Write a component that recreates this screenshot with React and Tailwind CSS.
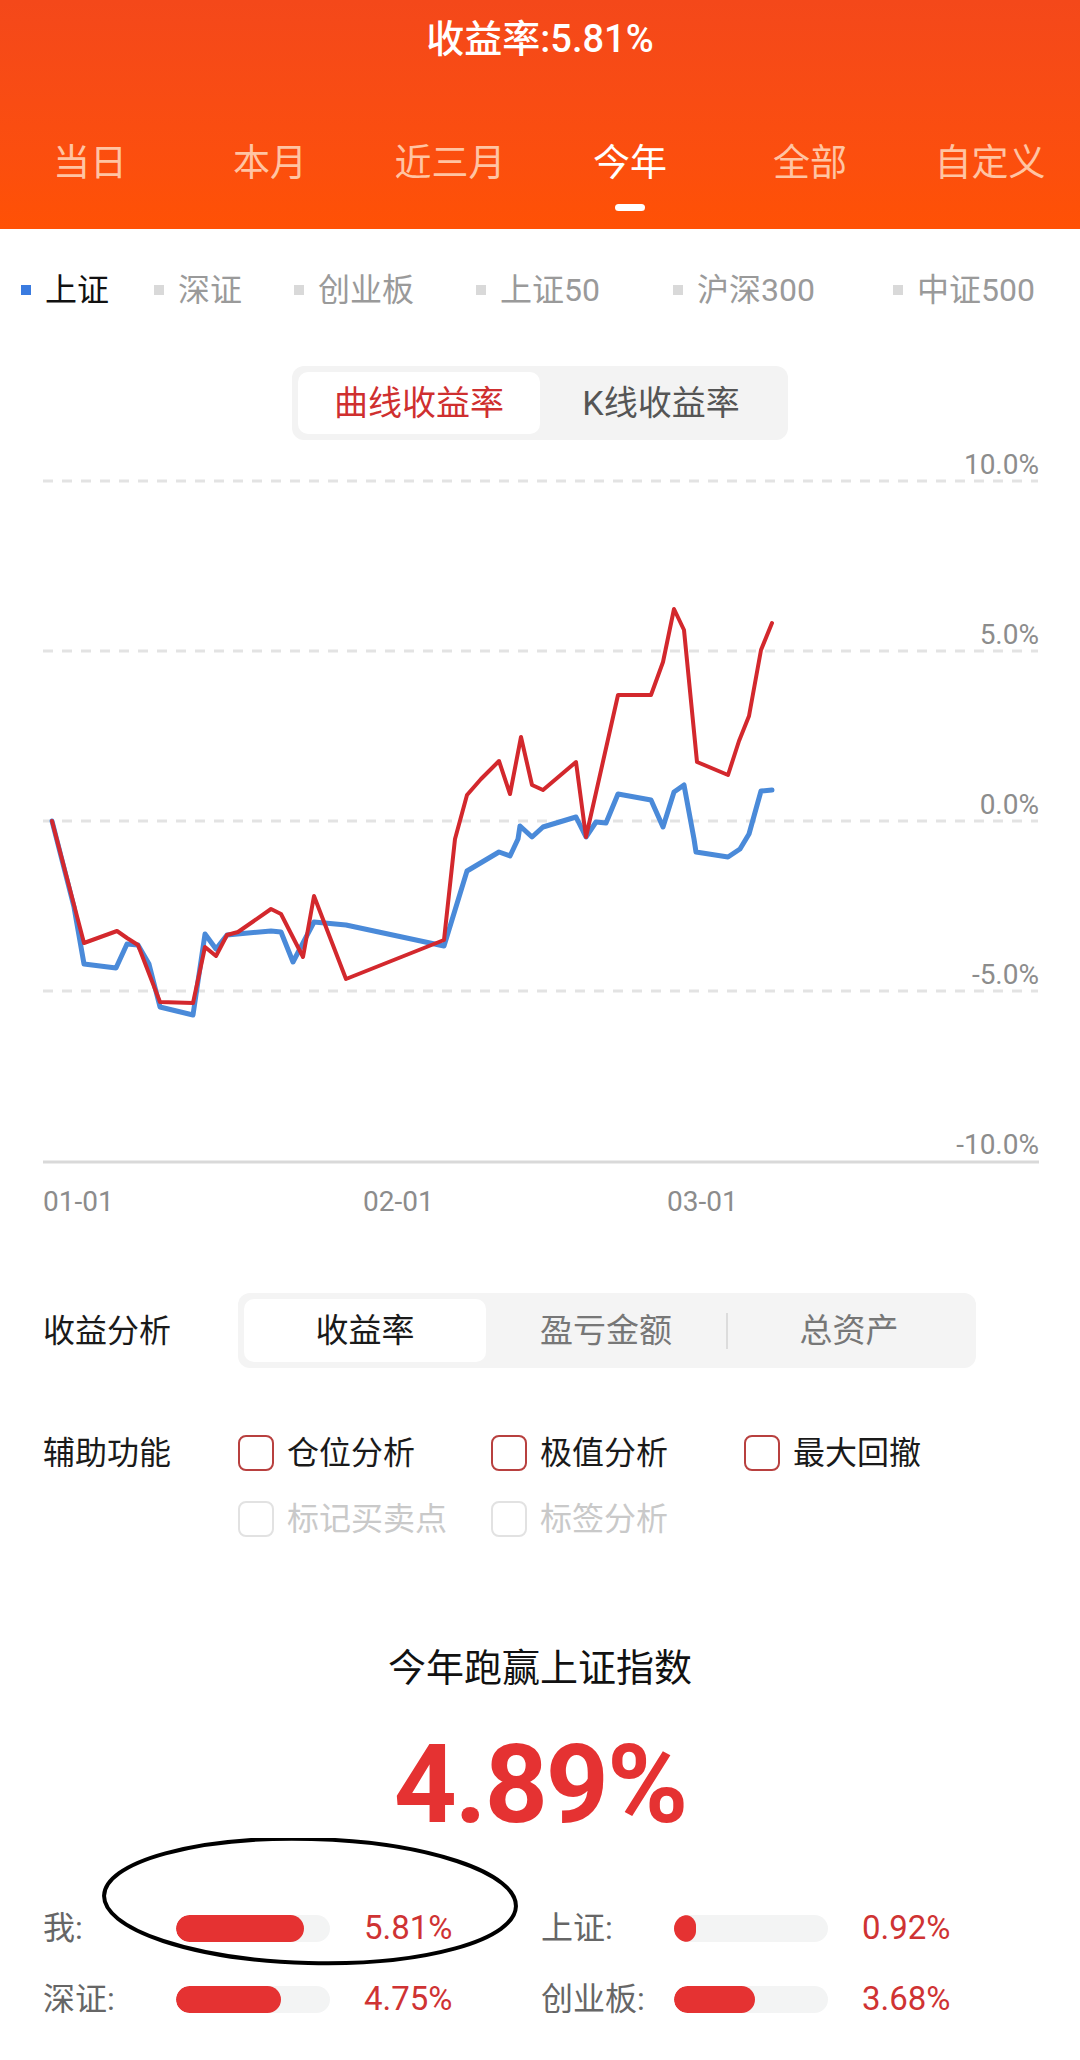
import { useState } from 'react';

const tabs = ['当日', '本月', '近三月', '今年', '全部', '自定义'];

const indices = [
  { name: '上证', w: 'w-[133px]' },
  { name: '深证', w: 'w-[140px]' },
  { name: '创业板', w: 'w-[182px]' },
  { name: '上证50', w: 'w-[197px]' },
  { name: '沪深300', w: 'w-[220px]' },
  { name: '中证500', w: 'w-auto' },
];

const blue = [[52,822],[74,908],[84,965],[116,969],[127,945],[138,946],[149,965],[160,1008],[193,1016],[205,935],[216,950],[227,936],[271,932],[281,933],[293,963],[314,923],[346,926],[444,947],[467,872],[499,853],[510,857],[518,840],[520,827],[532,838],[543,828],[576,818],[586,838],[596,823],[606,824],[618,795],[651,801],[663,828],[674,793],[684,786],[694,840],[696,853],[728,858],[740,850],[749,835],[761,792],[772,791]];

const red = [[52,822],[84,944],[117,932],[127,939],[138,946],[160,1003],[193,1004],[205,948],[216,957],[227,936],[238,933],[271,910],[281,915],[303,958],[314,897],[346,980],[444,941],[455,840],[467,796],[481,780],[499,762],[510,795],[521,738],[532,786],[543,791],[576,763],[586,838],[618,696],[651,696],[663,663],[674,610],[684,631],[697,763],[728,776],[739,742],[749,717],[761,651],[772,624]];

const yTicks = [
  { label: '10.0%', y: 482 },
  { label: '5.0%', y: 652 },
  { label: '0.0%', y: 822 },
  { label: '-5.0%', y: 992 },
  { label: '-10.0%', y: 1162 },
];

const stats = [
  [{ name: '我:', value: 5.81 }, { name: '上证:', value: 0.92 }],
  [{ name: '深证:', value: 4.75 }, { name: '创业板:', value: 3.68 }],
];

function Checkbox({ label, disabled }) {
  return (
    <div className="w-[253px] flex items-center gap-[13px]">
      <span className={`w-[36px] h-[36px] rounded-[8px] border-2 ${disabled ? 'border-[#e2e2e2]' : 'border-[#b8403f]'}`} />
      <span className={`text-[32px] leading-[40px] ${disabled ? 'text-[#c9c9c9]' : 'text-[#1a1a1a]'}`}>{label}</span>
    </div>
  );
}

function Chart() {
  const pts = (arr) => arr.map(([x, y]) => `${x},${y}`).join(' ');
  return (
    <svg viewBox="0 441 1080 784" width="1080" height="784" className="block">
      {yTicks.map((t, i) => (
        <g key={t.label}>
          {i < yTicks.length - 1 ? (
            <line x1="43" x2="1038" y1={t.y} y2={t.y} stroke="#e3e3e3" strokeWidth="3" strokeDasharray="10 9" />
          ) : (
            <line x1="43" x2="1039" y1={t.y + 1} y2={t.y + 1} stroke="#d9d9d9" strokeWidth="3" />
          )}
          <text x="1039" y={t.y - 7} textAnchor="end" fontSize="28" fill="#8c8c8c" fontFamily="Roboto, sans-serif">{t.label}</text>
        </g>
      ))}
      {[['01-01', 43], ['02-01', 363], ['03-01', 667]].map(([l, x]) => (
        <text key={l} x={x} y="1212" fontSize="28" fill="#8c8c8c" fontFamily="Roboto, sans-serif">{l}</text>
      ))}
      <polyline points={pts(blue)} fill="none" stroke="#4a8ad9" strokeWidth="5" strokeLinejoin="round" strokeLinecap="round" />
      <polyline points={pts(red)} fill="none" stroke="#d3282d" strokeWidth="4" strokeLinejoin="round" strokeLinecap="round" />
    </svg>
  );
}

export default function App() {
  const [tab, setTab] = useState(3);
  const [mode, setMode] = useState(0);

  return (
    <div className="min-h-screen bg-white font-[Roboto,'Noto_Sans_CJK_SC',sans-serif]">
      {/* Header */}
      <header className="h-[229px] bg-gradient-to-b from-[#f4481a] to-[#ff5105] pt-[18px]">
        <div className="text-center text-white text-[38px] leading-[42px] font-medium">收益率:5.81%</div>
        <div className="grid grid-cols-6 mt-[82px]">
          {tabs.map((t, i) => (
            <button key={t} onClick={() => setTab(i)} className="flex flex-col items-center">
              <span className={`text-[37px] leading-[44px] ${tab === i ? 'text-white' : 'text-[#ffc4a3]'}`}>{t}</span>
              <span className={`mt-[18px] w-[30px] h-[7px] rounded-full ${tab === i ? 'bg-white' : 'bg-transparent'}`} />
            </button>
          ))}
        </div>
      </header>

      {/* Index legend */}
      <div className="flex items-center pl-[21px] pt-[41px]">
        {indices.map((it, i) => (
          <div key={it.name} className={`${it.w} flex items-center gap-[14px]`}>
            <span className={`w-[10px] h-[10px] ${i === 0 ? 'bg-[#3a7be0]' : 'bg-[#d9d9d9]'}`} />
            <span className={`text-[32px] leading-[40px] ${i === 0 ? 'text-[#111]' : 'text-[#9a9a9a]'}`}>{it.name}</span>
          </div>
        ))}
      </div>

      {/* Curve / K toggle */}
      <div className="flex justify-center mt-[56px]">
        <div className="w-[496px] h-[74px] bg-[#f3f3f3] rounded-[12px] p-[6px] flex">
          {['曲线收益率', 'K线收益率'].map((t, i) => (
            <button
              key={t}
              onClick={() => setMode(i)}
              className={`flex-1 rounded-[10px] text-[34px] leading-[62px] ${mode === i ? 'bg-white text-[#cf2f2f]' : 'text-[#555]'}`}
            >
              {t}
            </button>
          ))}
        </div>
      </div>

      <Chart />

      {/* 收益分析 */}
      <div className="flex items-center pl-[43px] mt-[69px]">
        <div className="w-[195px] text-[32px] text-[#1a1a1a]">收益分析</div>
        <div className="w-[738px] h-[75px] bg-[#f4f4f4] rounded-[12px] p-[6px] grid grid-cols-3 items-center">
          <div className="h-[63px] bg-white rounded-[10px] flex items-center justify-center text-[33px] text-[#1a1a1a]">收益率</div>
          <div className="text-center text-[33px] text-[#777] border-r-2 border-[#dcdcdc] leading-[36px]">盈亏金额</div>
          <div className="text-center text-[33px] text-[#777]">总资产</div>
        </div>
      </div>

      {/* 辅助功能 */}
      <div className="flex items-center pl-[43px] mt-[61px]">
        <div className="w-[195px] text-[32px] text-[#1a1a1a]">辅助功能</div>
        <Checkbox label="仓位分析" />
        <Checkbox label="极值分析" />
        <Checkbox label="最大回撤" />
      </div>
      <div className="flex items-center pl-[238px] mt-[22px]">
        <Checkbox label="标记买卖点" disabled />
        <Checkbox label="标签分析" disabled />
      </div>

      {/* 跑赢 */}
      <div className="text-center text-[38px] leading-[50px] text-[#111] mt-[104px]">今年跑赢上证指数</div>
      <div className="text-center text-[110px] leading-[110px] font-bold tracking-[-2px] text-[#e53232] mt-[37px]">4.89%</div>

      {/* Stats */}
      <div className="relative mt-[68px] pl-[43px] pb-[40px]">
        {stats.map((row, r) => (
          <div key={r} className={`flex ${r > 0 ? 'mt-[31px]' : ''}`}>
            {row.map((s) => (
              <div key={s.name} className="w-[498px] h-[40px] flex items-center">
                <span className="w-[133px] text-[32px] text-[#666]">{s.name}</span>
                <span className="w-[154px] h-[27px] rounded-full bg-[#f3f4f4] overflow-hidden">
                  <span className="block h-full rounded-full bg-[#e53232]" style={{ width: `${Math.max(22, (s.value / 7) * 154)}px` }} />
                </span>
                <span className="ml-[34px] text-[33px] text-[#cf3333]">{s.value.toFixed(2)}%</span>
              </div>
            ))}
          </div>
        ))}
        <svg className="absolute left-[100px] top-[-70px] pointer-events-none" width="420" height="134" viewBox="0 0 420 134">
          <ellipse cx="210" cy="63" rx="206" ry="62" fill="none" stroke="#000" strokeWidth="4" transform="rotate(1.5 210 63)" />
        </svg>
      </div>
    </div>
  );
}
